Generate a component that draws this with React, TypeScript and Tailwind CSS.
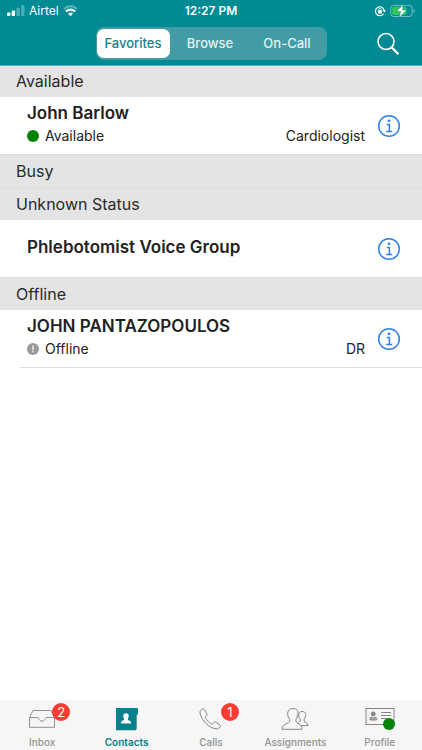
import React, { useState } from "react";

type Contact = { name: string; status?: "Available" | "Offline"; role?: string };
type Section = { title: string; contacts: Contact[] };

const sections: Section[] = [
  { title: "Available", contacts: [{ name: "John Barlow", status: "Available", role: "Cardiologist" }] },
  { title: "Busy", contacts: [] },
  { title: "Unknown Status", contacts: [{ name: "Phlebotomist Voice Group" }] },
  { title: "Offline", contacts: [{ name: "JOHN PANTAZOPOULOS", status: "Offline", role: "DR" }] },
];

function StatusBar() {
  return (
    <div className="grid h-[22px] grid-cols-3 items-center px-[7px] text-xs text-white">
      <div className="flex items-center gap-1">
        <svg width="18" height="12" viewBox="0 0 18 12" fill="currentColor" aria-hidden="true">
          <rect x="0" y="7.5" width="3.4" height="3.5" rx="1" />
          <rect x="4.7" y="5.5" width="3.4" height="5.5" rx="1" />
          <rect x="9.4" y="2.8" width="3.4" height="8.2" rx="1" opacity=".3" />
          <rect x="14.1" y="0" width="3.4" height="11" rx="1" opacity=".3" />
        </svg>
        <span className="text-xs">Airtel</span>
        <svg width="15" height="12" viewBox="0 0 15 12" fill="none" stroke="currentColor" aria-hidden="true">
          <path d="M.8 3.9Q7.5-1.7 14.2 3.9" strokeWidth="2" opacity=".35" />
          <path d="M2.8 6.5Q7.5 2.7 12.2 6.5" strokeWidth="2.2" />
          <path d="M5 8.6Q7.5 6.6 10 8.6L7.5 11.2Z" fill="currentColor" stroke="none" />
        </svg>
      </div>
      <span className="text-center text-xs font-semibold">12:27 PM</span>
      <div className="flex items-center justify-end gap-1">
        <svg width="12" height="12" viewBox="0 0 12 12" fill="none" stroke="currentColor" aria-hidden="true">
          <path d="M9.5 8.6A4.4 4.4 0 1 1 10 4.8" strokeWidth="1.2" />
          <path d="M8.4 5H12L10.4 7.6Z" fill="currentColor" stroke="none" />
          <rect x="3.9" y="5.2" width="4" height="3.2" rx=".4" fill="currentColor" stroke="none" />
          <path d="M4.8 5.3V4.4a1.1 1.1 0 0 1 2.2 0v.9" strokeWidth=".8" />
        </svg>
        <svg width="25" height="14" viewBox="0 0 25 14" aria-hidden="true">
          <rect x=".8" y="1.3" width="21.4" height="11.2" rx="3" fill="none" stroke="#fff" strokeOpacity=".45" />
          <rect x="2.3" y="2.8" width="14" height="8.2" rx="1.7" fill="#32c759" />
          <path d="M23.6 5v4q1.2-.6 1.2-2t-1.2-2Z" fill="#fff" opacity=".5" />
          <path d="M13.2 0 6.6 7.4h4L9 13.8 16.8 5.9h-4.2Z" fill="#fff" stroke="#008a94" strokeWidth=".6" />
        </svg>
      </div>
    </div>
  );
}

function Header() {
  const [active, setActive] = useState("Favorites");
  return (
    <header className="relative bg-[#008a94] shadow-[0_1px_0_#5da9b1]">
      <StatusBar />
      <div className="grid h-[43px] grid-cols-[1fr_auto_1fr] items-center">
        <span />
        <div className="grid h-[33px] w-[231px] grid-cols-3 rounded-lg bg-[#419ca5] py-0.5" role="group" aria-label="Contact lists">
          {["Favorites", "Browse", "On-Call"].map((label) => (
            <button
              key={label}
              type="button"
              aria-pressed={active === label}
              onClick={() => setActive(label)}
              className={
                active === label
                  ? "mr-[3px] ml-px rounded-[7px] bg-white text-[13px] font-medium text-[#178088]"
                  : "mr-[3px] ml-px rounded-[7px] text-[13px] font-medium text-[#e5f3f4]"
              }
            >
              {label}
            </button>
          ))}
        </div>
        <button type="button" aria-label="Search" className="mr-5 justify-self-end p-0.5 text-white">
          <svg width="24" height="24" viewBox="0 0 24 24" fill="none" stroke="currentColor" aria-hidden="true">
            <circle cx="10" cy="9.5" r="8" strokeWidth="1.6" />
            <path d="m15.8 15.5 6 6" strokeWidth="2.4" strokeLinecap="round" />
          </svg>
        </button>
      </div>
    </header>
  );
}

function InfoIcon() {
  return (
    <svg width="24" height="24" viewBox="0 0 24 24" fill="none" stroke="#2f80ed" aria-hidden="true">
      <circle cx="12" cy="12" r="10.3" strokeWidth="1.5" />
      <circle cx="12" cy="6.8" r="1.4" fill="#2f80ed" stroke="none" />
      <path d="M9.8 10.5h2.6v6.8M9.2 17.4h6" strokeWidth="1.5" />
    </svg>
  );
}

function StatusIcon({ status }: { status: "Available" | "Offline" }) {
  if (status === "Available") return <span className="size-3 rounded-full bg-[#078207]" />;
  return (
    <svg width="12" height="12" viewBox="0 0 12 12" aria-hidden="true">
      <circle cx="6" cy="6" r="6" fill="#999" />
      <path d="M6 2.5v4.8M6 8v1.5" stroke="#e8e8e8" strokeWidth="1.6" />
    </svg>
  );
}

function ContactRow({ contact }: { contact: Contact }) {
  return (
    <li className="flex h-[57px] items-center pr-[21px] pl-[27px]">
      <div className="flex-1 pb-1">
        <p className="text-[17px] leading-6 font-semibold">{contact.name}</p>
        {contact.status && (
          <div className="flex items-center gap-1.5 text-sm leading-[22px]">
            <StatusIcon status={contact.status} />
            <span>{contact.status}</span>
            <span className="ml-auto">{contact.role}</span>
          </div>
        )}
      </div>
      <button type="button" aria-label={"Details for " + contact.name} className="ml-3">
        <InfoIcon />
      </button>
    </li>
  );
}

function InboxIcon() {
  return (
    <svg width="28" height="24" viewBox="0 0 28 24" fill="none" stroke="#929292" aria-hidden="true">
      <path d="M1.5 10.5 5 3.5h18l3.5 7v9.8h-25Zm0 0h8.3c.5 0 .7.3.8.8.9 3.8 5.9 3.8 6.8 0 .1-.5.3-.8.8-.8h8.3" />
    </svg>
  );
}

function ContactsIcon() {
  return (
    <svg width="28" height="24" viewBox="0 0 28 24" aria-hidden="true">
      <path d="M3 1h20.500q1.500 0 1.500 1.300v4.400q0 1-1.300 1V21.500q0 1.800-1.700 1.800H3Z" fill="#078089" />
      <path d="M13 6.300c3 0 3.200 2.800 2 5.400v1c.5 1 3.200.7 3.200 3.900H7.800c0-3.200 2.700-2.900 3.200-3.900v-1c-1.200-2.600-1-5.400 2-5.400Z" fill="#fff" />
    </svg>
  );
}

function CallsIcon() {
  return (
    <svg width="28" height="24" viewBox="0 0 28 24" fill="none" stroke="#858585" strokeLinejoin="round" aria-hidden="true">
      <path d="M6.900 2.300c-1.800.5-3.300 2.100-2.900 4.100C5.400 13.800 13 21.700 20.100 22.400c2 .2 3.800-1.100 4.400-2.600.2-.6 0-1-.5-1.300l-4.400-2.900c-.5-.3-1-.2-1.400.2l-1.500 1.400c-.4.4-.9.4-1.400.1-2.400-1.400-4.400-3.500-5.800-5.800-.3-.5-.2-1 .1-1.400l1.200-1.500c.3-.4.3-.8.1-1.200L8.100 2.800c-.3-.5-.7-.7-1.200-.5Z" transform="translate(-1 -.5)" />
    </svg>
  );
}

function AssignmentsIcon() {
  return (
    <svg width="28" height="24" viewBox="0 0 28 24" fill="none" stroke="#858585" strokeLinejoin="round" aria-hidden="true">
      <path d="M12 1.500c4.600 0 5.700 3.600 4.600 7.500-.4 1.500-1 2.400-1.600 3.300v2.200c0 2.400 6 1.500 6 7.800H1c0-6.300 7.600-5.200 7.600-7.800v-2.200c-.8-1-1.300-2-1.700-3.300C6 5.100 7.400 1.500 12 1.500Z" />
      <path d="M17.600 7.800c0-2.200 1.600-3.300 3.400-3.300 3.400 0 4.200 2.400 3.400 5.300-.4 1.200-.8 1.900-1.300 2.500v1.700c0 1.700 3.900 1.200 3.900 4.600h-7M17.600 7.800c0 1.800.8 3.500 1.800 4.500V14l-1.800 1.300" />
    </svg>
  );
}

function ProfileIcon() {
  return (
    <svg width="30" height="24" viewBox="0 0 30 24" fill="none" stroke="#858585" aria-hidden="true">
      <rect x="1" y="1.500" width="28" height="16" />
      <path d="M16 5.500h10M16 8.500h10M16 11.500h6" />
      <circle cx="8.300" cy="6.900" r="1.900" fill="#858585" />
      <path d="M5 13v-1.400c0-1 1-1.400 2-1.600l1.300 1.300L9.600 10c1 .2 2 .6 2 1.600V13Z" fill="#aaa" />
    </svg>
  );
}

const tabs = [
  { label: "Inbox", Icon: InboxIcon, badge: 2 },
  { label: "Contacts", Icon: ContactsIcon, current: true },
  { label: "Calls", Icon: CallsIcon, badge: 1 },
  { label: "Assignments", Icon: AssignmentsIcon },
  { label: "Profile", Icon: ProfileIcon, online: true },
];

function TabBar() {
  return (
    <nav className="grid h-[50px] grid-cols-5 bg-[#f6f6f6]" aria-label="Main">
      {tabs.map(({ label, Icon, badge, current, online }) => (
        <a
          key={label}
          href={"#" + label.toLowerCase()}
          aria-current={current ? "page" : undefined}
          className={
            current
              ? "flex flex-col items-center pt-[7px] text-[10px] leading-[14px] font-semibold text-[#078089]"
              : "flex flex-col items-center pt-[7px] text-[10px] leading-[14px] font-medium text-[#929292]"
          }
        >
          <span className="relative mb-1">
            <Icon />
            {badge && (
              <span className="absolute -top-1 left-6 flex size-[18px] items-center justify-center rounded-full bg-[#fb3c31] text-[13px] font-normal text-white">
                {badge}
              </span>
            )}
            {online && <span className="absolute top-[11px] left-[18px] size-3 rounded-full bg-[#078207]" />}
          </span>
          <span>{label}</span>
        </a>
      ))}
    </nav>
  );
}

export default function App() {
  return (
    <div className="flex min-h-screen flex-col bg-white font-['Inter',sans-serif] text-[#222]">
      <Header />
      <main className="flex-1">
        {sections.map(({ title, contacts }) => (
          <section key={title} className="group">
            <h2 className="h-8 bg-[#e4e4e4] pl-4 text-base leading-8 text-[#2b2b2b]">{title}</h2>
            {contacts.length > 0 && (
              <ul>
                {contacts.map((contact) => (
                  <ContactRow key={contact.name} contact={contact} />
                ))}
              </ul>
            )}
            <div className="h-px bg-[#dcdcdc] group-last:ml-5" />
          </section>
        ))}
      </main>
      <TabBar />
    </div>
  );
}
